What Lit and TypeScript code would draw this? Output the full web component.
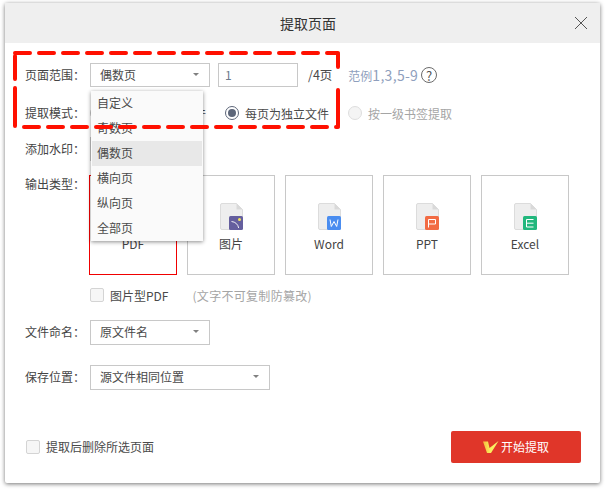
import { LitElement, html, css, svg } from "lit";
import { customElement } from "lit/decorators.js";

const fileIcon = (badge: unknown) => html`<svg class="ficon" width="26" height="28" viewBox="0 0 26 28">
  <path d="M3 .5h14.500l6 6V25a1.500 1.500 0 0 1-1.500 1.500H3A1.500 1.500 0 0 1 1.500 25V2A1.500 1.500 0 0 1 3 .5z" fill="#eeeeee" stroke="#dcdcdc"/>
  <path d="M17.500.5v6h6z" fill="#d9d9d9"/>
  ${badge}
</svg>`;
const badgeBox = (c: string, inner: unknown) => svg`<rect x="10" y="13" width="14" height="14" rx="1.500" fill="${c}"/>${inner}`;

const icons: Record<string, unknown> = {
  PDF: badgeBox("#e0463c", svg`<path d="M14 24v-8h3.500a2 2 0 0 1 0 5H14" fill="none" stroke="#fff"/>`),
  图片: badgeBox("#655f9e", svg`<path d="M12.500 18.500c4 .3 6.500 3 7.200 6.500" fill="none" stroke="#fff" stroke-width=".9"/><circle cx="20.500" cy="16.500" r="1.500" fill="#f4e65a"/>`),
  Word: badgeBox("#4a8df0", svg`<path d="M13 16.500l1.300 7 2.700-5 2.700 5 1.300-7" fill="none" stroke="#fff"/>`),
  PPT: badgeBox("#f26b43", svg`<path d="M13.500 24.500v-8h7v4.500h-7" fill="none" stroke="#fff"/>`),
  Excel: badgeBox("#22b77d", svg`<path d="M20.500 16.500h-7v7.500h7M13.500 20.200h7" fill="none" stroke="#fff"/>`),
};

@customElement("app-root")
export class AppRoot extends LitElement {
  static styles = css`
    :host {
      display: block; position: relative; width: 606px; height: 490px; box-sizing: border-box;
      padding: 3px 6px 7px 5px; background: #fff; overflow: hidden;
      font-family: "Noto Sans CJK SC", "Noto Sans", sans-serif; font-size: 12px; color: #4a4a4a;
    }
    .dialog { height: 480px; display: flex; flex-direction: column; background: #fff; box-shadow: 0 1px 4px rgba(0,0,0,.55); border-radius: 2px; }
    .head { box-sizing: border-box; height: 40px; flex: none; background: #efefef; display: flex; align-items: center; justify-content: center; position: relative; font-size: 14px; color: #333; padding-left: 11px; padding-bottom: 1px; }
    .close { position: absolute; right: 12px; top: 13px; display: block; }
    .body { flex: 1; display: flex; flex-direction: column; padding: 20px 19px 20px 20px; }
    .row { display: flex; align-items: center; }
    .label { box-sizing: border-box; width: 65px; flex: none; color: #444; padding-bottom: 2px; }
    .select { box-sizing: border-box; height: 24px; border: 1px solid #c8c8c8; display: flex; align-items: center; justify-content: space-between; padding: 0 10px 2px 9px; background: #fff; color: #4a4a4a; }
    .w100 { width: 100px; }
    .w120 { width: 120px; }
    .w180 { width: 180px; }
    .tall { height: 25px; }
    .caret { width: 0; height: 0; border: 3px solid transparent; border-top: 3px solid #808080; border-bottom: 0; }
    .input { box-sizing: border-box; width: 80px; height: 24px; margin-left: 8px; border: 1px solid #c8c8c8; padding: 0 0 2px 6px; display: flex; align-items: center; color: #6b7a8c; }
    .total { margin-left: 10px; padding-bottom: 2px; font-size: 12.500px; }
    .hint { margin-left: 16px; color: #8f9fbd; padding-bottom: 1px; white-space: nowrap; }
    .hint b { font-weight: 400; font-size: 14px; letter-spacing: .3px; }
    .help { box-sizing: border-box; margin-left: 3px; width: 16px; height: 16px; border: 1px solid #6b6b6b; border-radius: 50%; display: flex; align-items: center; justify-content: center; font-size: 13px; color: #555; line-height: 1; }
    .mode { margin-top: 16px; height: 20px; }
    .radio { box-sizing: border-box; width: 14px; height: 14px; border-radius: 50%; border: 1px solid #c8c8c8; background: #fff; flex: none; margin-right: 6px; }
    .radio.on { border-color: #5d6679; display: flex; align-items: center; justify-content: center; }
    .radio.on i { width: 8px; height: 8px; border-radius: 50%; background: #5d6679; }
    .radio.off { background: #f4f4f4; border-color: #dedede; }
    .first { width: 135px; display: flex; align-items: center; flex: none; padding-bottom: 1px; }
    .second { width: 123px; display: flex; align-items: center; flex: none; }
    .muted { color: #a5a5a5; }
    .mark { margin-top: 14px; }
    .outp { margin-top: 14px; align-items: flex-start; }
    .outp .label { width: 64px; }
    .cards { display: flex; gap: 10px; }
    .card { box-sizing: border-box; width: 88px; height: 100px; border: 1px solid #c8c8c8; display: flex; flex-direction: column; align-items: center; padding-top: 27px; color: #444; }
    .card.sel { border-color: #f00000; }
    .ficon { display: block; margin-left: 1px; flex: none; }
    .card span { margin-top: 4px; line-height: 18px; }
    .check { box-sizing: border-box; width: 14px; height: 14px; border: 1px solid #d4d4d4; border-radius: 2px; background: #f6f6f6; flex: none; margin-right: 6px; }
    .imgpdf { margin-top: 12px; padding-left: 65px; height: 16px; padding-bottom: 1px; box-sizing: content-box; }
    .note { margin-left: 24px; color: #a5a5a5; letter-spacing: .3px; }
    .name { margin-top: 16px; }
    .save { margin-top: 20px; }
    .foot { margin-top: auto; justify-content: space-between; padding-left: 1px; }
    .foot .left { display: flex; align-items: center; padding-bottom: 1px; }
    .btn { box-sizing: border-box; width: 130px; height: 32px; background: #e03629; border-radius: 2px; display: flex; align-items: center; justify-content: center; color: #fff; padding-bottom: 1px; }
    .btn svg { margin-right: 2px; display: block; }
    .menu { position: absolute; left: 91px; top: 91px; width: 112px; height: 150px; box-sizing: border-box; padding: 0 1px; background: #fafafa; box-shadow: 0 1px 4px rgba(0,0,0,.45); display: flex; flex-direction: column; justify-content: flex-start; }
    .item { height: 25px; line-height: 24px; padding-left: 5px; color: #4a4a4a; flex: none; }
    .item.hot { background: #e8e8e8; }
    .dash { position: absolute; left: 0; top: 0; pointer-events: none; display: block; }
  `;

  render() {
    const types = ["PDF", "图片", "Word", "PPT", "Excel"];
    return html`
      <div class="dialog">
        <div class="head">提取页面
          <svg class="close" width="14" height="14" viewBox="0 0 14 14"><path d="M1 1l12 12M13 1L1 13" stroke="#555" stroke-width="1" fill="none"/></svg>
        </div>
        <div class="body">
          <div class="row">
            <div class="label">页面范围：</div>
            <div class="select w120">偶数页<i class="caret"></i></div>
            <div class="input">1</div>
            <div class="total">/4页</div>
            <div class="hint">范例<b>1,3,5-9</b></div>
            <div class="help">?</div>
          </div>
          <div class="row mode">
            <div class="label">提取模式：</div>
            <div class="first"><i class="radio"></i>所有页为一个文件</div>
            <div class="second"><i class="radio on"><i></i></i>每页为独立文件</div>
            <div class="row muted"><i class="radio off"></i>按一级书签提取</div>
          </div>
          <div class="row mark">
            <div class="label">添加水印：</div>
            <div class="select w100"></div>
          </div>
          <div class="row outp">
            <div class="label">输出类型：</div>
            <div class="cards">
              ${types.map((t, i) => html`<div class="card ${i === 0 ? "sel" : ""}">${fileIcon(icons[t])}<span>${t}</span></div>`)}
            </div>
          </div>
          <div class="row imgpdf"><i class="check"></i>图片型PDF<span class="note">(文字不可复制防篡改)</span></div>
          <div class="row name">
            <div class="label">文件命名：</div>
            <div class="select w120 tall">原文件名<i class="caret"></i></div>
          </div>
          <div class="row save">
            <div class="label">保存位置：</div>
            <div class="select w180 tall">源文件相同位置<i class="caret"></i></div>
          </div>
          <div class="row foot">
            <div class="left"><i class="check"></i>提取后删除所选页面</div>
            <div class="btn">
              <svg width="16" height="14" viewBox="0 0 16 14">
                <defs><linearGradient id="vg" x1="0" x2="1" y1="0" y2="0"><stop offset="0" stop-color="#f5b93a"/><stop offset=".45" stop-color="#f9ec5c"/><stop offset="1" stop-color="#faf26a"/></linearGradient></defs>
                <path d="M0 1.500h5l1.500 6.500L15.500 1 8 13H4z" fill="url(#vg)"/>
              </svg>
              开始提取
            </div>
          </div>
        </div>
      </div>
      <div class="menu">
        ${["自定义", "奇数页"].map((t) => html`<div class="item">${t}</div>`)}
        <div class="item hot">偶数页</div>
        ${["横向页", "纵向页", "全部页"].map((t) => html`<div class="item">${t}</div>`)}
      </div>
      <svg class="dash" width="606" height="490" viewBox="0 0 606 490" fill="none" stroke="#ff1000" stroke-width="4" stroke-linecap="round">
        <path d="M15 53H338" stroke-dasharray="15 9"/>
        <path d="M24 127H338" stroke-dasharray="15 9"/>
        <path d="M15 56V79M15 88V126"/>
        <path d="M338 54V67M338 90V126"/>
      </svg>
    `;
  }
}
